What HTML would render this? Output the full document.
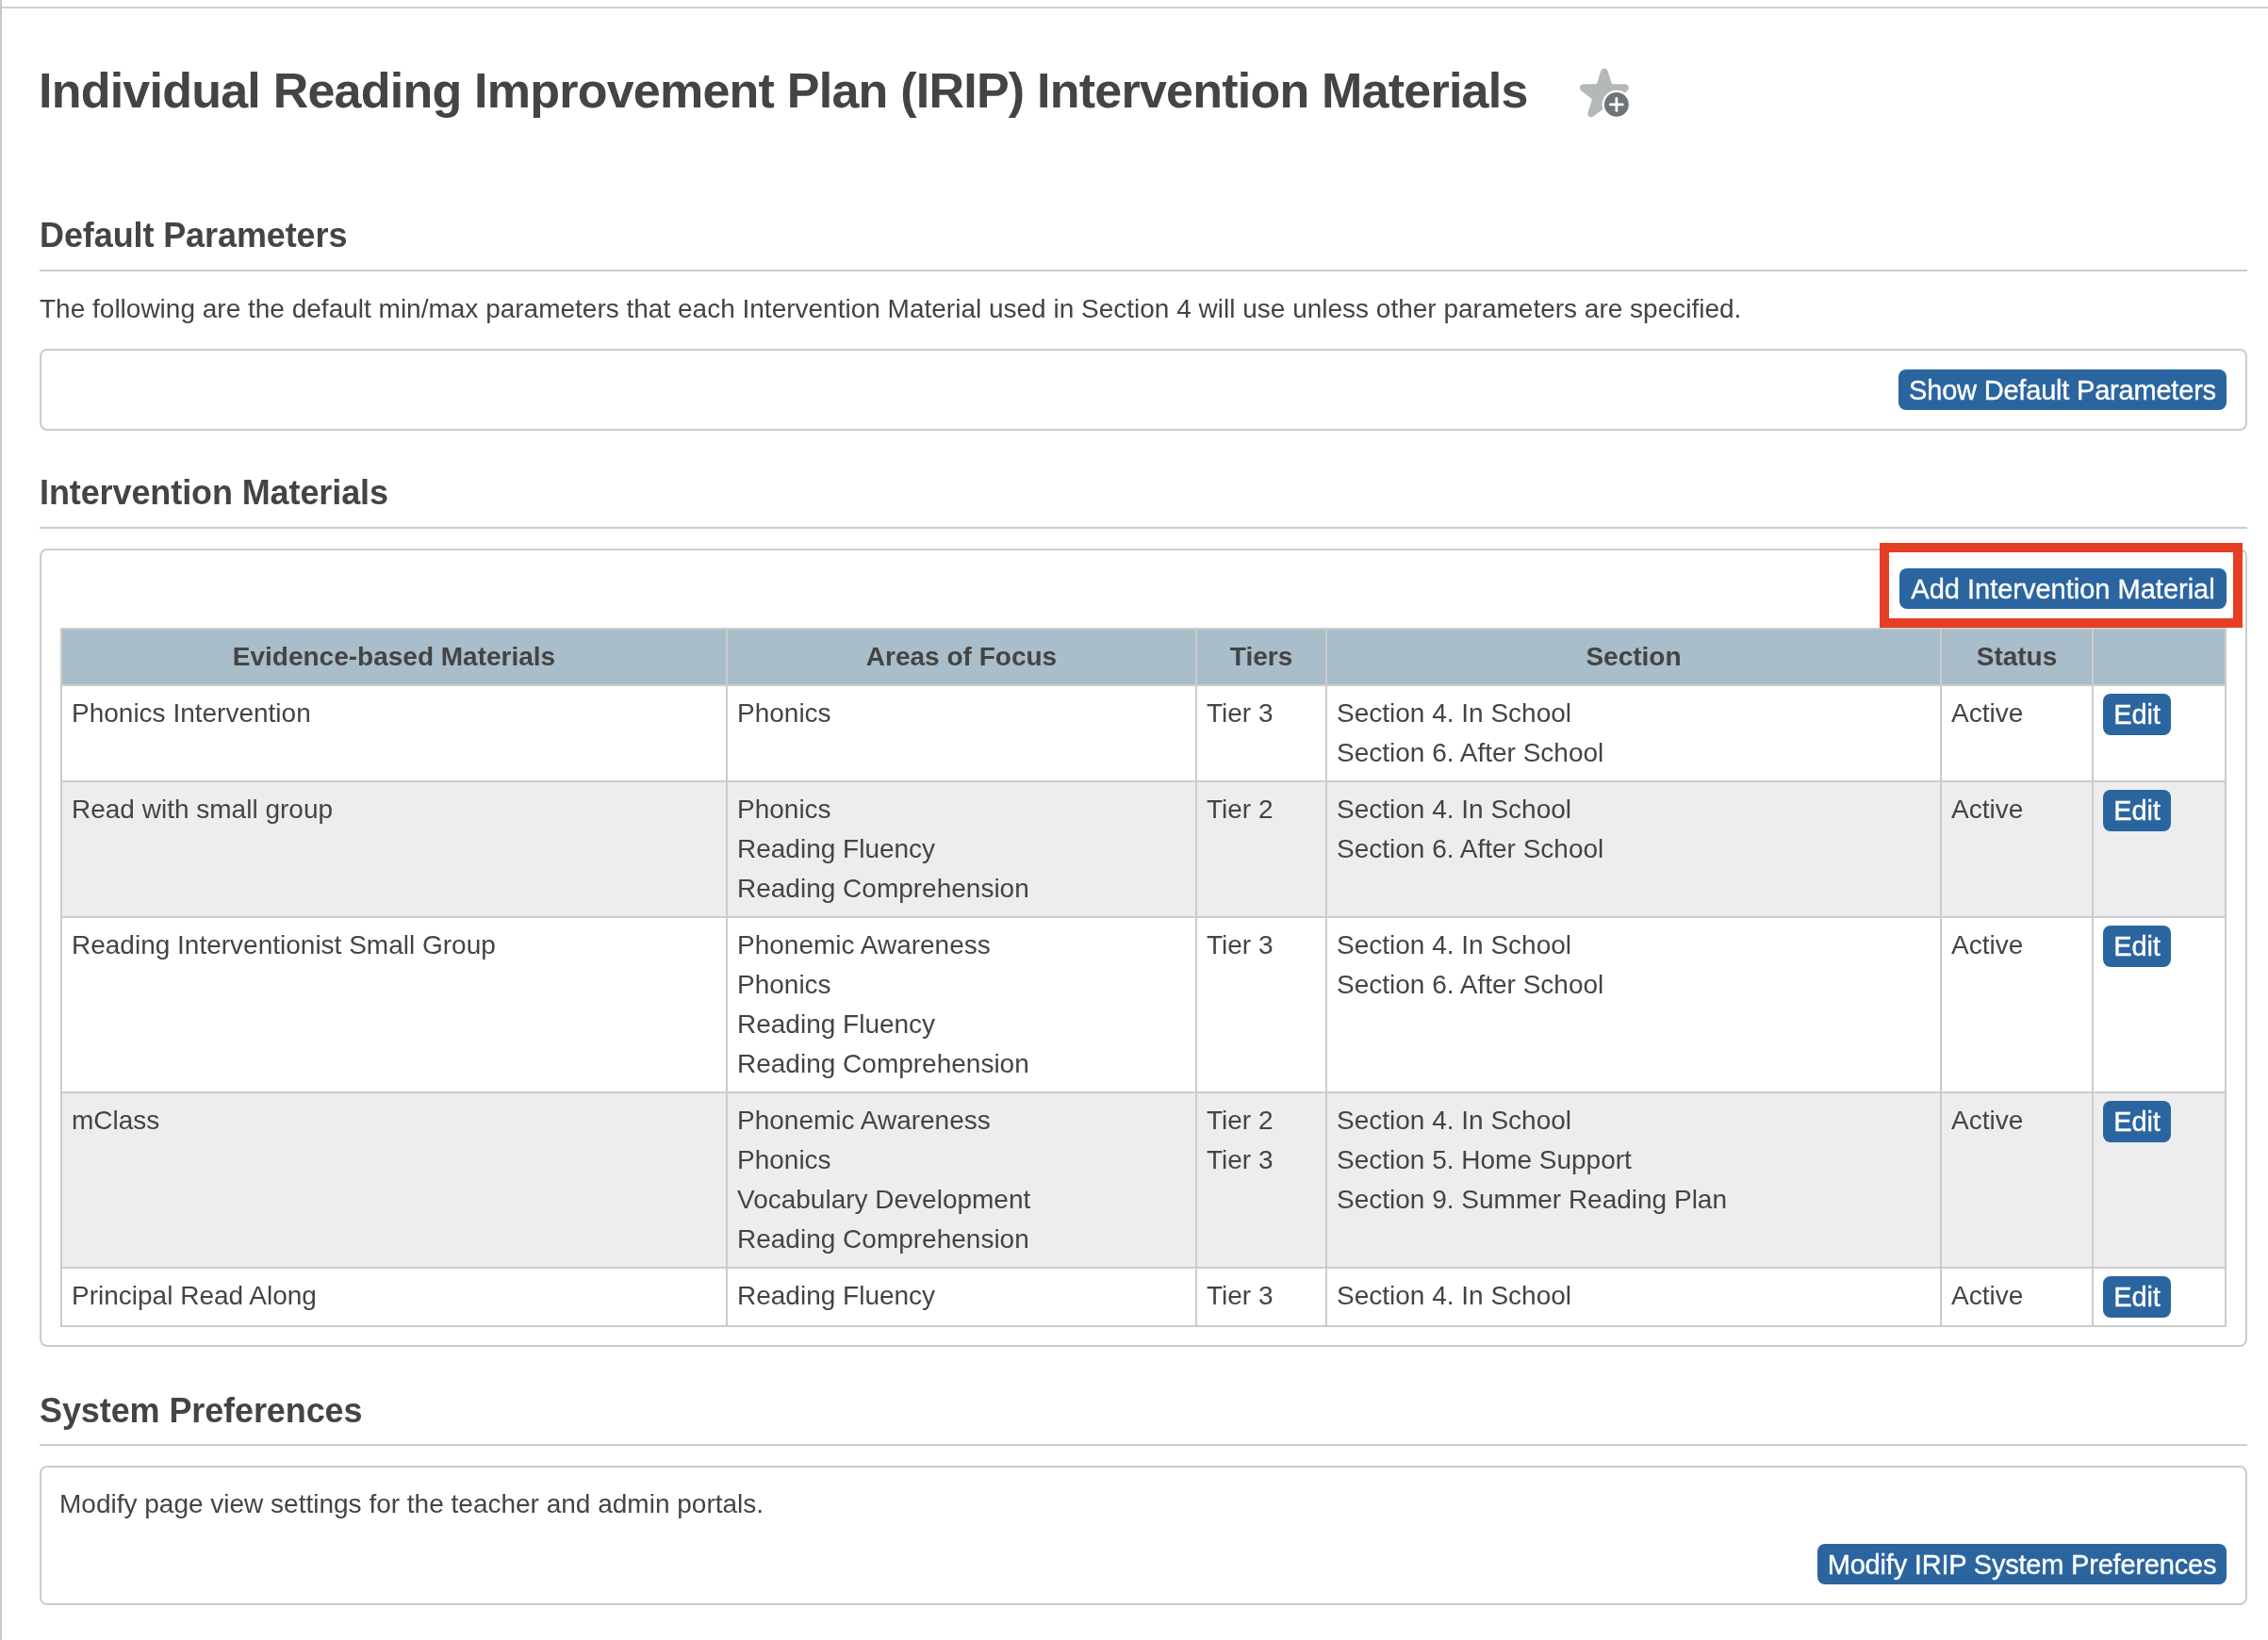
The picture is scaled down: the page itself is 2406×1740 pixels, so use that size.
<!DOCTYPE html>
<html>
<head>
<meta charset="utf-8">
<style>
html,body{margin:0;padding:0;background:#fff;}
body{width:2406px;height:1740px;position:relative;overflow:hidden;font-family:"Liberation Sans",sans-serif;color:#444;}
.lb{position:absolute;left:0;top:0;width:2px;height:1740px;background:#c4c8ca;}
.tl{position:absolute;left:2px;top:7px;width:2404px;height:2px;background:#cfcfcf;}
.abs{position:absolute;white-space:nowrap;}
h1{position:absolute;margin:0;left:41px;top:57px;font-size:52px;line-height:78px;font-weight:bold;white-space:nowrap;letter-spacing:-0.77px;}
h2{position:absolute;margin:0;left:42px;font-size:36px;line-height:54px;font-weight:bold;white-space:nowrap;letter-spacing:-0.1px;}
.hr{position:absolute;left:42px;width:2342px;height:2px;background:#ccc;}
p{position:absolute;margin:0;font-size:28px;line-height:42px;white-space:nowrap;}
.box{position:absolute;left:42px;width:2338px;border:2px solid #ccc;border-radius:8px;box-sizing:content-box;}
.btn{position:absolute;background:#2b65a0;color:#fff;-webkit-text-stroke:0.35px #fff;border-radius:8px;font-size:29px;line-height:44px;height:44px;text-align:center;white-space:nowrap;}
.red{position:absolute;left:1994px;top:576px;width:365px;height:70px;border:10px solid #e63d25;}
table{position:absolute;left:64px;top:666px;border-collapse:collapse;table-layout:fixed;font-size:28px;line-height:42px;}
td,th{border:2px solid #ccc;padding:8px 10px;vertical-align:top;text-align:left;}
th{background:#a9bdca;text-align:center;font-weight:bold;}
tr.alt td{background:#ededed;}
.eb{display:inline-block;background:#2b65a0;color:#fff;-webkit-text-stroke:0.35px #fff;border-radius:8px;width:72px;height:44px;line-height:45px;font-size:29px;letter-spacing:-0.1px;text-align:center;vertical-align:top;}
</style>
</head>
<body><div id="wrap" style="position:absolute;left:0;top:0;width:2406px;height:1740px;will-change:transform;">
<div class="lb"></div>
<div class="tl"></div>

<h1>Individual Reading Improvement Plan (IRIP) Intervention Materials</h1>
<svg class="abs" style="left:1670px;top:66px" width="64" height="64" viewBox="0 0 64 64">
  <path transform="translate(0 6) scale(1 1.04) translate(0 -6)" d="M35.47 8.97 L39.56 21.56 A1.50 1.50 0 0 0 40.98 22.60 L54.22 22.60 A3.75 3.75 0 0 1 56.42 29.38 L45.72 37.16 A1.50 1.50 0 0 0 45.17 38.84 L49.26 51.43 A3.75 3.75 0 0 1 43.49 55.62 L32.78 47.84 A1.50 1.50 0 0 0 31.02 47.84 L20.31 55.62 A3.75 3.75 0 0 1 14.54 51.43 L18.63 38.84 A1.50 1.50 0 0 0 18.08 37.16 L7.38 29.38 A3.75 3.75 0 0 1 9.58 22.60 L22.82 22.60 A1.50 1.50 0 0 0 24.24 21.56 L28.33 8.97 A3.75 3.75 0 0 1 35.47 8.97Z" fill="#b4b8b9"/>
  <circle cx="44.9" cy="44.9" r="15.2" fill="#fff"/>
  <circle cx="44.9" cy="44.9" r="12.9" fill="#6c7478"/>
  <path d="M44.9 38.4 V51.4 M38.4 44.9 H51.4" stroke="#fff" stroke-width="2.8" stroke-linecap="round"/>
</svg>

<h2 style="top:223px">Default Parameters</h2>
<div class="hr" style="top:286px"></div>
<p style="left:42px;top:307px">The following are the default min/max parameters that each Intervention Material used in Section 4 will use unless other parameters are specified.</p>
<div class="box" style="top:370px;height:83px"></div>
<div class="btn" style="left:2014px;top:392px;width:348px;height:43px;line-height:44px;letter-spacing:-0.2px">Show Default Parameters</div>

<h2 style="top:496px">Intervention Materials</h2>
<div class="hr" style="top:559px"></div>
<div class="box" style="top:582px;height:843px"></div>
<div class="red"></div>
<div class="btn" style="left:2015px;top:603px;width:347px;height:43px;line-height:44px">Add Intervention Material</div>

<table>
<colgroup><col style="width:706px"><col style="width:498px"><col style="width:138px"><col style="width:652px"><col style="width:161px"><col style="width:141px"></colgroup>
<tr><th>Evidence-based Materials</th><th>Areas of Focus</th><th>Tiers</th><th>Section</th><th>Status</th><th></th></tr>
<tr><td>Phonics Intervention</td><td>Phonics</td><td>Tier 3</td><td>Section 4. In School<br>Section 6. After School</td><td>Active</td><td><span class="eb">Edit</span></td></tr>
<tr class="alt"><td>Read with small group</td><td>Phonics<br>Reading Fluency<br>Reading Comprehension</td><td>Tier 2</td><td>Section 4. In School<br>Section 6. After School</td><td>Active</td><td><span class="eb">Edit</span></td></tr>
<tr><td>Reading Interventionist Small Group</td><td>Phonemic Awareness<br>Phonics<br>Reading Fluency<br>Reading Comprehension</td><td>Tier 3</td><td>Section 4. In School<br>Section 6. After School</td><td>Active</td><td><span class="eb">Edit</span></td></tr>
<tr class="alt"><td>mClass</td><td>Phonemic Awareness<br>Phonics<br>Vocabulary Development<br>Reading Comprehension</td><td>Tier 2<br>Tier 3</td><td>Section 4. In School<br>Section 5. Home Support<br>Section 9. Summer Reading Plan</td><td>Active</td><td><span class="eb">Edit</span></td></tr>
<tr><td>Principal Read Along</td><td>Reading Fluency</td><td>Tier 3</td><td>Section 4. In School</td><td>Active</td><td><span class="eb">Edit</span></td></tr>
</table>

<h2 style="top:1470px">System Preferences</h2>
<div class="hr" style="top:1532px"></div>
<div class="box" style="top:1555px;height:144px"></div>
<p style="left:63px;top:1575px">Modify page view settings for the teacher and admin portals.</p>
<div class="btn" style="left:1928px;top:1638px;width:434px;height:43px;line-height:44px;letter-spacing:-0.2px">Modify IRIP System Preferences</div>

</div></body>
</html>
